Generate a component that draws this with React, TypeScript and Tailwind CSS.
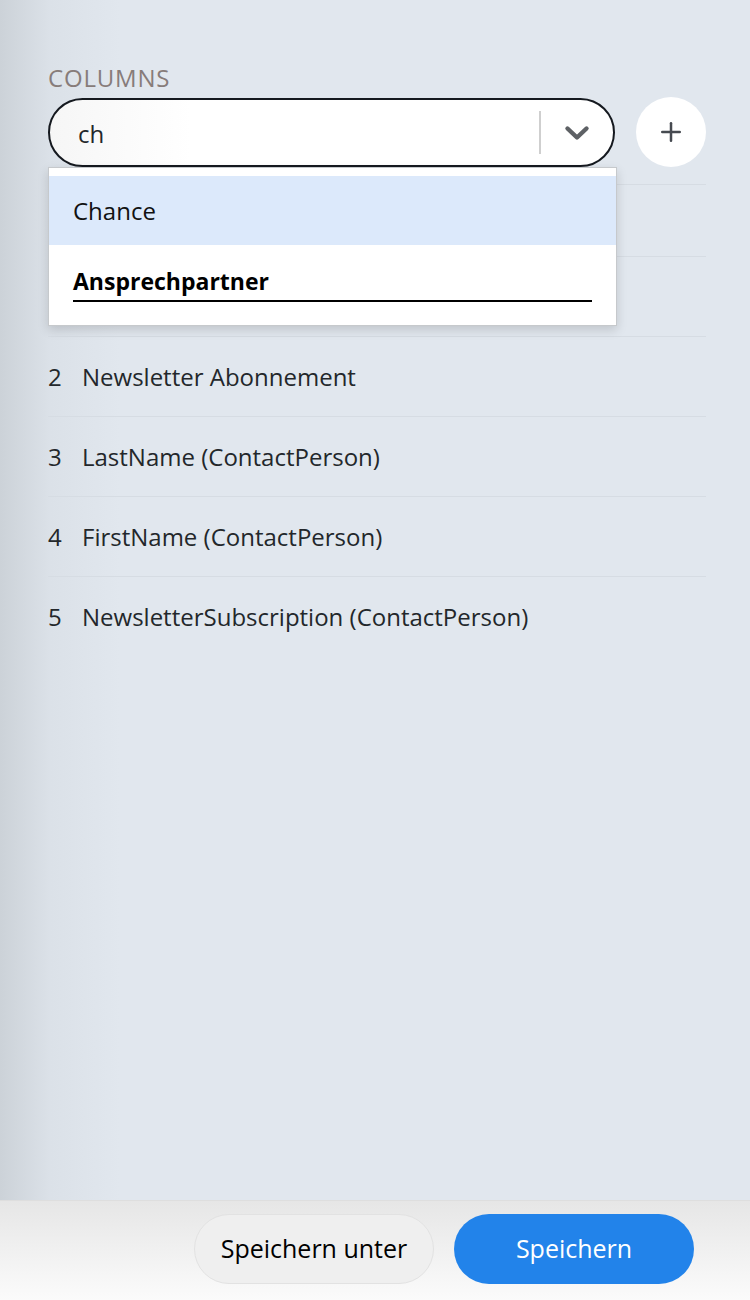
import React from "react";
import { Plus } from "lucide-react";

// rows 0 and 1 sit under the open dropdown, so they carry no visible text
const rows = [
  { n: null, label: "" },
  { n: null, label: "" },
  { n: 2, label: "Newsletter Abonnement" },
  { n: 3, label: "LastName (ContactPerson)" },
  { n: 4, label: "FirstName (ContactPerson)" },
  { n: 5, label: "NewsletterSubscription (ContactPerson)" },
];

export default function App() {
  return (
    <div
      className="flex h-[1300px] w-[750px] flex-col text-[#23272b]"
      style={{ fontFamily: '"Open Sans", "Liberation Sans", sans-serif' }}
    >
      <main className="flex-1 bg-[linear-gradient(to_right,#ccd2d8,#dbe1e8_50px,#e1e7ee_120px,#e1e7ee)] pl-[48px] pr-[44px] pt-[62px]">
        <div className="mb-[3px] text-[24px] leading-[32px] tracking-[0.8px] text-[#877c7a] uppercase">
          Columns
        </div>

        <div className="relative">
          <div className="flex items-center gap-[21px]">
            <div className="flex h-[69px] w-[567px] items-center rounded-full border-2 border-[#15191f] bg-[linear-gradient(to_right,#f6f6f6,#ffffff_25%)]">
              <span className="flex-1 pt-[4px] pl-[28px] text-[24px]">ch</span>
              <span className="h-[43px] w-[2px] bg-[#cfcfcf]" />
              <span className="flex w-[72px] items-center justify-center pt-[2px]">
                <svg width="26" height="17" viewBox="0 0 26 17" fill="none">
                  <polyline
                    points="3.5,3.5 13,12.5 22.5,3.5"
                    stroke="#5e6165"
                    strokeWidth="4.4"
                    strokeLinecap="round"
                    strokeLinejoin="round"
                  />
                </svg>
              </span>
            </div>
            <button className="flex h-[70px] w-[70px] items-center justify-center rounded-full bg-white">
              <Plus className="h-[30px] w-[30px] text-[#464a50]" strokeWidth={2} />
            </button>
          </div>

          <div className="mt-[17px] border-t border-[#d6dce3]">
            {rows.map((r, i) => (
              <div
                key={i}
                className={`flex items-center text-[24px] ${
                  i === 0 ? "h-[72px]" : "h-[80px]"
                } ${i < rows.length - 1 ? "border-b border-[#d6dce3]" : ""}`}
              >
                <span className="w-[34px]">{r.n}</span>
                <span>{r.label}</span>
              </div>
            ))}
          </div>

          <div className="absolute left-0 top-[70px] w-[569px] border border-[#c6c9cc] bg-white pt-[8px] pb-[8px] shadow-[0_4px_10px_rgba(0,0,0,0.15)]">
            <div className="flex h-[69px] items-center bg-[#dce9fb] px-[24px] text-[24px] text-[#111]">
              Chance
            </div>
            <div className="flex h-[72px] items-center px-[24px] pt-[4px]">
              <span className="block w-full border-b-2 border-black pb-[2px] text-[23px] font-bold text-black">
                Ansprechpartner
              </span>
            </div>
          </div>
        </div>
      </main>

      <footer className="flex h-[100px] items-start justify-end gap-[20px] border-t border-[#dedede] bg-[linear-gradient(to_bottom,#e6e6e6,#fbfbfb)] pt-[13px] pr-[56px]">
        <button className="h-[70px] w-[240px] rounded-full border border-[#e2e2e2] bg-[#efefef] text-[25px] text-black">
          Speichern unter
        </button>
        <button className="h-[70px] w-[240px] rounded-full bg-[#2283ea] text-[25px] text-white">
          Speichern
        </button>
      </footer>
    </div>
  );
}
